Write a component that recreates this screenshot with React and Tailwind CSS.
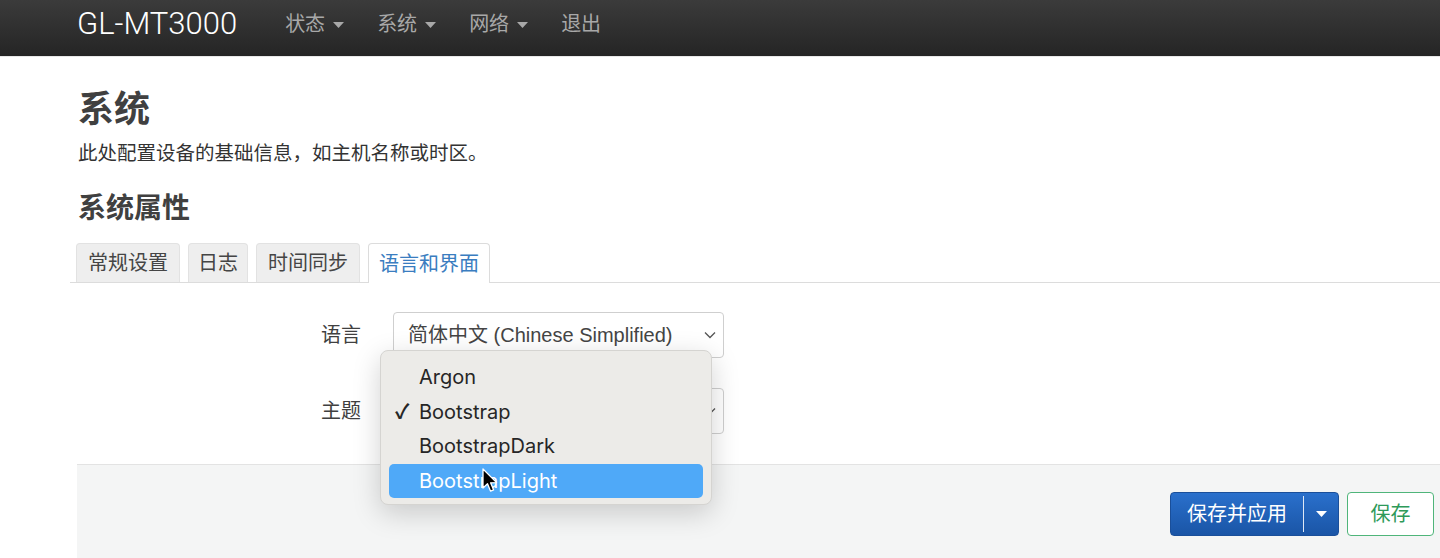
import React from "react";

const CJK = { fontFamily: '"Liberation Sans", "Noto Sans CJK SC", sans-serif' };

function Caret({ className = "" }) {
  return (
    <svg width="11" height="6" viewBox="0 0 11 6" className={className}>
      <path d="M0 0 L11 0 L5.5 6 Z" fill="currentColor" />
    </svg>
  );
}

function Chevron() {
  return (
    <svg width="12" height="8" viewBox="0 0 12 8" className="text-[#555]">
      <path d="M1 1.5 L6 6.5 L11 1.5" fill="none" stroke="currentColor" strokeWidth="1.3" />
    </svg>
  );
}

function NavItem({ label, caret }) {
  return (
    <div className="flex items-center gap-[8px] text-[20px] text-[#a8a8a8]">
      <span>{label}</span>
      {caret && <Caret className="mt-[2px]" />}
    </div>
  );
}

function Tab({ label, active, px = "px-[11px]" }) {
  return active ? (
    <div className={"h-[40px] flex items-center rounded-t-[4px] border border-[#dcdcdc] border-b-0 bg-white text-[20px] text-[#3a7dc0] -mb-px " + px}>
      {label}
    </div>
  ) : (
    <div className={"h-[39px] flex items-center rounded-t-[4px] border border-[#e2e2e2] border-b-0 bg-[#eeeeee] text-[20px] text-[#454545] " + px}>
      {label}
    </div>
  );
}

function Select({ value }) {
  return (
    <div className="w-[331px] h-[46px] rounded-[4px] border border-[#cfcfcf] bg-white flex items-center justify-between pl-[14px] pr-[7px] text-[20px] text-[#454545]">
      <span>{value}</span>
      <Chevron />
    </div>
  );
}

function MenuItem({ label, checked, active }) {
  return (
    <div
      className={
        "h-[34.5px] mx-[8px] rounded-[5px] flex items-center relative " +
        (active ? "bg-[#4fa9f8] text-white" : "text-[#262626]")
      }
    >
      {checked && (
        <span className="absolute left-[6px] text-[20px] leading-none font-bold text-[#262626]">✓</span>
      )}
      <span className="pl-[30px] text-[20px]" style={{ fontFamily: 'Inter, "Noto Sans", sans-serif' }}>
        {label}
      </span>
    </div>
  );
}

export default function App() {
  return (
    <div className="relative w-[1440px] h-[558px] overflow-hidden bg-white" style={CJK}>
      {/* Navbar */}
      <div className="h-[57px] bg-gradient-to-b from-[#3b3b3b] to-[#252525] flex items-center pl-[77px] pb-[8px] border-b border-[#e8e8e8]">
        <div
          className="text-[31px] text-white font-light mr-[48px]"
          style={{ fontFamily: 'Roboto, "Liberation Sans", sans-serif' }}
        >
          GL-MT3000
        </div>
        <div className="flex items-center gap-[33px]">
          <NavItem label="状态" caret />
          <NavItem label="系统" caret />
          <NavItem label="网络" caret />
          <NavItem label="退出" />
        </div>
      </div>

      {/* Main */}
      <div className="pl-[70px]">
        <h1 className="ml-[8px] mt-[31px] text-[36px] leading-[43px] font-bold text-[#404040]">系统</h1>
        <p className="ml-[8px] mt-[8px] text-[19.5px] leading-[28px] text-[#333]">
          此处配置设备的基础信息，如主机名称或时区。
        </p>
        <h2 className="ml-[8px] mt-[25px] text-[28px] leading-[34px] font-bold text-[#404040]">系统属性</h2>

        <div className="mt-[17px] flex items-end gap-[8px] pl-[6px] border-b border-[#dcdcdc] h-[40px]">
          <Tab label="常规设置" />
          <Tab label="日志" px="px-[9px]" />
          <Tab label="时间同步" px="px-[11px]" />
          <Tab label="语言和界面" px="px-[10px]" active />
        </div>

        <div className="mt-[29px] flex flex-col gap-[30px]">
          <div className="flex items-center">
            <div className="w-[291px] text-right text-[20px] text-[#404040]">语言</div>
            <div className="ml-[32px]">
              <Select value="简体中文 (Chinese Simplified)" />
            </div>
          </div>
          <div className="flex items-center">
            <div className="w-[291px] text-right text-[20px] text-[#404040]">主题</div>
            <div className="ml-[32px]">
              <Select value="Bootstrap" />
            </div>
          </div>
        </div>

        <div className="mt-[30px] ml-[7px] h-[110px] bg-[#f4f5f5] border-t border-[#e3e3e3] flex justify-end items-start pt-[27px] pr-[6px] gap-[8px]">
          <div className="h-[44px] flex rounded-[4px] bg-gradient-to-b from-[#2a70cc] to-[#1a55a6] border border-[#1a4f9a] text-white text-[20px]">
            <div className="px-[16px] flex items-center">保存并应用</div>
            <div className="w-px bg-[#dfe8f5] my-[3px]" />
            <div className="w-[34px] flex items-center justify-center">
              <Caret />
            </div>
          </div>
          <div className="h-[44px] w-[87px] flex items-center justify-center rounded-[4px] bg-white border border-[#4fb57a] text-[#2e9a5a] text-[20px]">
            保存
          </div>
        </div>
      </div>

      {/* Dropdown menu overlay */}
      <div className="absolute left-[380px] top-[350px] w-[332px] h-[155px] rounded-[8px] bg-[#ecebe8] border border-[#d5d4d1] shadow-[0_8px_28px_rgba(0,0,0,0.18)] pt-[9px]">
        <MenuItem label="Argon" />
        <MenuItem label="Bootstrap" checked />
        <MenuItem label="BootstrapDark" />
        <MenuItem label="BootstrapLight" active />
      </div>

      {/* Mouse cursor */}
      <svg
        className="absolute left-[482px] top-[468px]"
        width="17"
        height="26"
        viewBox="0 0 17 26"
      >
        <path
          d="M1 1 L1 20 L5.5 15.8 L8.6 23.2 L11.6 21.9 L8.6 14.8 L14.6 14.6 Z"
          fill="#000"
          stroke="#fff"
          strokeWidth="1.3"
          strokeLinejoin="round"
        />
      </svg>
    </div>
  );
}
